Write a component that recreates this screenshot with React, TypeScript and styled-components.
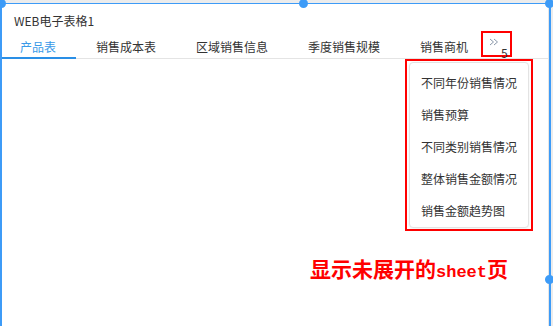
import React from 'react'
import styled, { createGlobalStyle } from 'styled-components'

const blue = '#3d9bf7'
const red = '#ff0000'

const tabs = ['产品表', '销售成本表', '区域销售信息', '季度销售规模', '销售商机']
const hidden = ['不同年份销售情况', '销售预算', '不同类别销售情况', '整体销售金额情况', '销售金额趋势图']

const Global = createGlobalStyle`
  body {
    margin: 0;
    background: #ececec;
    font-family: "Noto Sans CJK SC", "Noto Sans", sans-serif;
    color: #333;
  }
`

const Page = styled.div`
  width: 553px;
  height: 326px;
  overflow: hidden;
  padding-top: 3px;
  box-sizing: border-box;
`

const Frame = styled.div`
  position: relative;
  width: 551px;
  height: 330px;
  box-sizing: border-box;
  background: #fff;
  border-top: 1px solid ${blue};
  border-left: 2px solid ${blue};
  border-right: 2px solid ${blue};
`

const Inner = styled.div`
  height: 100%;
  border-right: 1px solid #e6e6e6;
  display: flex;
  flex-direction: column;
`

const Handle = styled.span<{ $x: number; $y: number }>`
  position: absolute;
  left: ${p => p.$x - 2 - 4.5}px;
  top: ${p => p.$y - 4 - 4.5}px;
  width: 9px;
  height: 9px;
  border-radius: 50%;
  background: ${blue};
  z-index: 3;
`

const Title = styled.div`
  padding: 8px 0 0 12px;
  font-size: 12px;
  line-height: 17px;
`

const TabBar = styled.div`
  display: flex;
  align-items: flex-start;
  border-bottom: 1px solid #e4e4e4;
`

const Tab = styled.div<{ $active?: boolean; $first?: boolean }>`
  padding: 9px 20px 2px ${p => (p.$first ? 18 : 20)}px;
  margin-bottom: -1px;
  font-size: 12px;
  line-height: 17px;
  white-space: nowrap;
  color: ${p => (p.$active ? '#3a9ae8' : '#333')};
  border-bottom: 2px solid ${p => (p.$active ? '#2a8fe6' : 'transparent')};
`

const MoreButton = styled.div`
  margin: 2px 0 0 -7px;
  width: 31px;
  height: 26px;
  box-sizing: border-box;
  border: 2px solid ${red};
  display: flex;
  align-items: flex-start;
  padding: 5px 0 0 6px;
`

const Count = styled.span`
  margin: 9px 0 0 2px;
  font-size: 12px;
  line-height: 12px;
  color: #333;
`

const Dropdown = styled.div`
  position: absolute;
  left: 403px;
  top: 55px;
  width: 128px;
  height: 172px;
  box-sizing: border-box;
  border: 2px solid ${red};
  padding: 1px 2px;
  z-index: 2;
`

const Menu = styled.ul`
  list-style: none;
  margin: 0;
  height: 100%;
  box-sizing: border-box;
  padding: 4px 0 0 11px;
  background: #fff;
  border: 1px solid #e3e3e3;
  border-radius: 4px;
  box-shadow: 0 1px 3px rgba(0, 0, 0, 0.06);
`

const MenuItem = styled.li`
  font-size: 12px;
  line-height: 32px;
  white-space: nowrap;
  color: #333;
`

const Body = styled.div`
  flex: 1;
  display: flex;
  justify-content: flex-end;
  align-items: flex-start;
  padding: 197px 40px 0 0;
`

const Note = styled.div`
  color: ${red};
  font-weight: bold;
  font-size: 21px;
  line-height: 24px;
  white-space: nowrap;
`

const Mono = styled.span`
  font-family: "Liberation Mono", monospace;
  font-size: 17px;
`

function Chevrons() {
  return (
    <svg width="10" height="8" viewBox="0 0 10 8">
      <path d="M1 1 L4.5 4 L1 7 M5 1 L8.5 4 L5 7" fill="none" stroke="#8a98aa" strokeWidth="1" />
    </svg>
  )
}

export default function App() {
  return (
    <Page>
      <Global />
      <Frame>
        <Handle $x={1} $y={3} />
        <Handle $x={303} $y={3} />
        <Handle $x={549} $y={3} />
        <Handle $x={549} $y={279} />
        <Inner>
          <Title>WEB电子表格1</Title>
          <TabBar>
            {tabs.map((t, i) => (
              <Tab key={t} $active={i === 0} $first={i === 0}>{t}</Tab>
            ))}
            <MoreButton>
              <Chevrons />
              <Count>{hidden.length}</Count>
            </MoreButton>
          </TabBar>
          <Body>
            <Note>显示未展开的<Mono>sheet</Mono>页</Note>
          </Body>
        </Inner>
        <Dropdown>
          <Menu>
            {hidden.map(h => (
              <MenuItem key={h}>{h}</MenuItem>
            ))}
          </Menu>
        </Dropdown>
      </Frame>
    </Page>
  )
}
